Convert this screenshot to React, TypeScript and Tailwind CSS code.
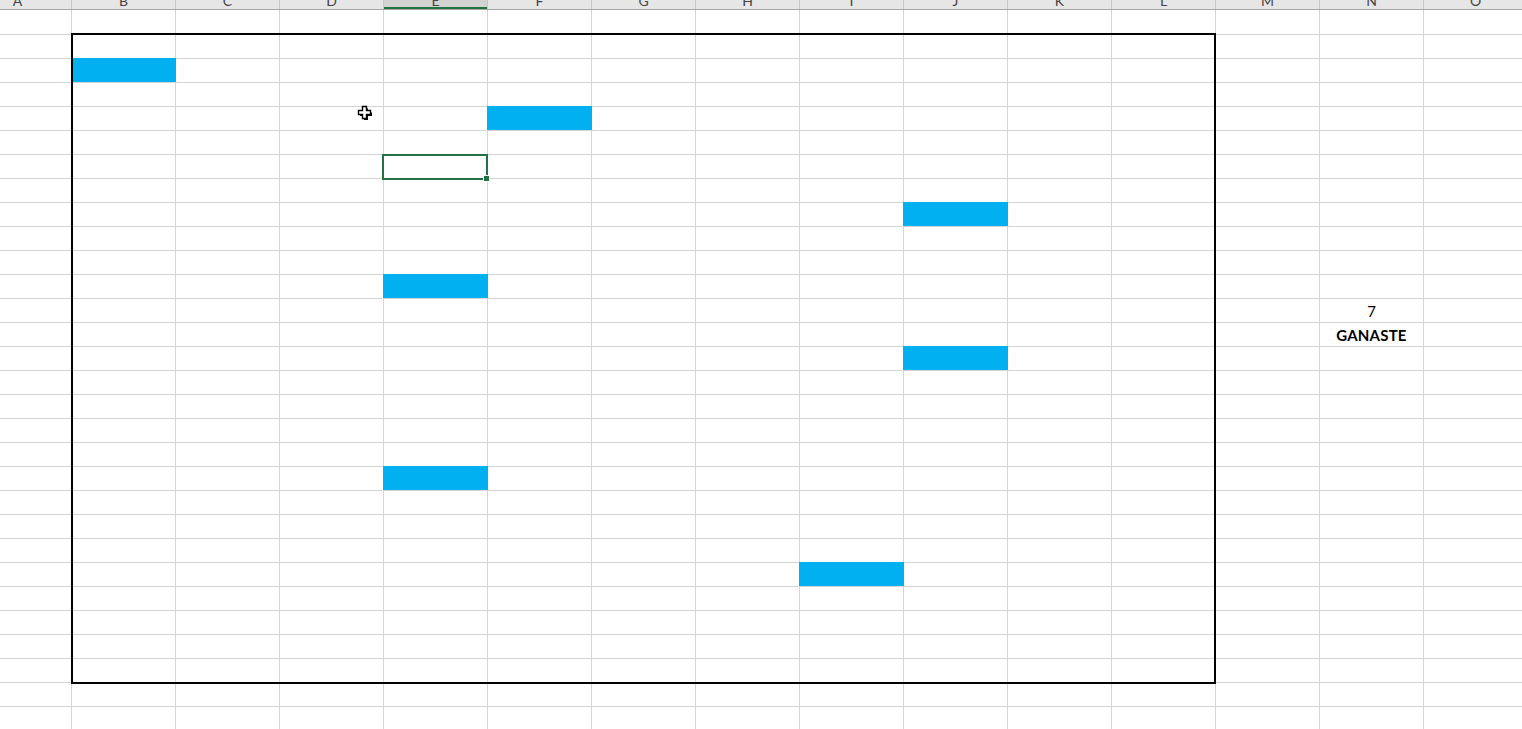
import React from "react";

const COLS = ["A", "B", "C", "D", "E", "F", "G", "H", "I", "J", "K", "L", "M", "N", "O"];
const ROWS = Array.from({ length: 30 }, (_, i) => i + 1);

// filled cells by row number
const BLUE: Record<number, string[]> = {
  3: ["B"],
  5: ["F"],
  9: ["J"],
  12: ["E"],
  15: ["J"],
  20: ["E"],
  24: ["I"],
};

const TEXT: Record<string, { text: string; bold?: boolean }> = {
  "13N": { text: "7" },
  "14N": { text: "GANASTE", bold: true },
};

function HeaderCell({ col }: { col: string }) {
  const selected = col === "E";
  const first = col === "A";
  return (
    <div
      className={`relative flex h-full shrink-0 items-end justify-center overflow-hidden border-r border-[#c6c6c6] ${
        first ? "w-[72px]" : "w-[104px]"
      } ${selected ? "bg-[#d2d2d2]" : ""}`}
    >
      <span
        className={`mb-[1px] text-[14px] leading-[14px] text-[#444] ${first ? "-ml-[36px]" : ""}`}
      >
        {col}
      </span>
      {selected && <div className="absolute bottom-0 left-0 right-0 h-[2px] bg-[#217346]" />}
    </div>
  );
}

function Cell({ row, col }: { row: number; col: string }) {
  const blue = BLUE[row]?.includes(col);
  const first = col === "A";
  const t = TEXT[`${row}${col}`];
  const selected = row === 7 && col === "E";
  return (
    <div
      className={`relative flex h-[24px] shrink-0 items-center justify-center border-r ${
        row > 1 ? "border-t" : ""
      } ${first ? "w-[72px]" : "w-[104px]"} ${
        blue
          ? "border-[#00b0f0] bg-[#00b0f0] shadow-[-1px_0_0_#00b0f0]"
          : "border-[#d4d4d4]"
      }`}
    >
      {t && (
        <span
          className={`mt-[2px] text-[15px] leading-none text-black ${
            t.bold ? "font-bold tracking-[0.2px]" : ""
          }`}
        >
          {t.text}
        </span>
      )}
      {selected && (
        <div className="absolute -bottom-[2px] -left-[2px] -right-[1px] -top-[1px] z-10 border-2 border-[#217346]">
          <div className="absolute -bottom-[3px] -right-[3px] h-[5px] w-[5px] bg-[#217346] outline outline-1 outline-white" />
        </div>
      )}
    </div>
  );
}

function Cursor() {
  return (
    <svg width="16" height="16" viewBox="0 0 16 16" className="absolute left-[357px] top-[105px] z-20">
      <path
        d="M6 2.5h4v4h4v3.5h-4v4h-4v-4h-4v-3.5h4z"
        fill="black"
        transform="translate(1 1)"
      />
      <path
        d="M5.5 1.5h4v4h4v4h-4v4h-4v-4h-4v-4h4z"
        fill="white"
        stroke="black"
        strokeWidth="1.4"
        strokeLinejoin="miter"
      />
    </svg>
  );
}

export default function App() {
  return (
    <div className="relative h-[729px] w-[1522px] overflow-hidden bg-white font-['Lato','Liberation_Sans',sans-serif]">
      <div className="flex h-[10px] border-b border-[#a6a6a6] bg-[#e6e6e6]">
        {COLS.map((c) => (
          <HeaderCell key={c} col={c} />
        ))}
      </div>

      <div className="flex flex-col">
        {ROWS.map((r) => (
          <div key={r} className="flex">
            {COLS.map((c) => (
              <Cell key={c} row={r} col={c} />
            ))}
          </div>
        ))}
      </div>

      {/* outer thick border around B2:L28 */}
      <div className="pointer-events-none absolute left-[71px] top-[33px] z-10 h-[651px] w-[1145px] border-2 border-black" />

      <Cursor />
    </div>
  );
}
